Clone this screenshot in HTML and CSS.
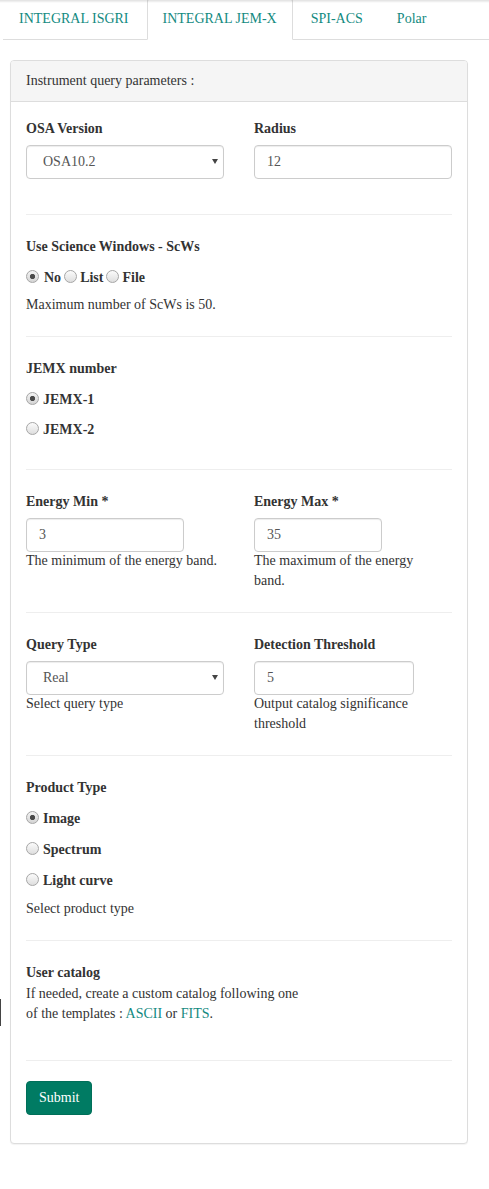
FILE: index.html
```html
<!DOCTYPE html>
<html lang="en">
<head>
<meta charset="utf-8">
<title>Instrument query parameters</title>
<link rel="stylesheet" href="styles.css">
</head>
<body>
<ul class="tabs">
  <li class="tab"><a href="#">INTEGRAL ISGRI</a></li>
  <li class="tab active"><a href="#">INTEGRAL JEM-X</a></li>
  <li class="tab"><a href="#">SPI-ACS</a></li>
  <li class="tab"><a href="#">Polar</a></li>
</ul>

<div class="panel">
  <div class="panel-heading">Instrument query parameters :</div>
  <div class="panel-body">

    <div class="section s1 grid">
      <div class="field">
        <label class="lbl">OSA Version</label>
        <div class="select-wrap"><select class="ctl"><option>OSA10.2</option></select></div>
      </div>
      <div class="field">
        <label class="lbl">Radius</label>
        <input class="ctl" type="text" value="12">
      </div>
    </div>
    <hr>

    <div class="section">
      <div class="lbl mb10">Use Science Windows - ScWs</div>
      <div class="inline-radios"><label class="ri first"><input type="radio" name="scw" checked><span>No</span></label><label class="ri"><input type="radio" name="scw"><span>List</span></label><label class="ri"><input type="radio" name="scw"><span>File</span></label></div>
      <p class="help mt7">Maximum number of ScWs is 50.</p>
    </div>
    <hr>

    <div class="section s3">
      <div class="lbl mb10">JEMX number</div>
      <label class="rv"><input type="radio" name="jemx" checked><span>JEMX-1</span></label>
      <label class="rv last"><input type="radio" name="jemx"><span>JEMX-2</span></label>
    </div>
    <hr>

    <div class="section grid">
      <div class="field">
        <label class="lbl">Energy Min *</label>
        <input class="ctl w158" type="text" value="3">
        <p class="help tight">The minimum of the energy band.</p>
      </div>
      <div class="field">
        <label class="lbl">Energy Max *</label>
        <input class="ctl w128" type="text" value="35">
        <p class="help tight narrow">The maximum of the energy band.</p>
      </div>
    </div>
    <hr>

    <div class="section grid">
      <div class="field">
        <label class="lbl">Query Type</label>
        <div class="select-wrap"><select class="ctl"><option>Real</option></select></div>
        <p class="help tight">Select query type</p>
      </div>
      <div class="field">
        <label class="lbl">Detection Threshold</label>
        <input class="ctl w160" type="text" value="5">
        <p class="help tight narrow">Output catalog significance threshold</p>
      </div>
    </div>
    <hr>

    <div class="section">
      <div class="lbl mb10">Product Type</div>
      <label class="rv wide"><input type="radio" name="prod" checked><span>Image</span></label>
      <label class="rv wide"><input type="radio" name="prod"><span>Spectrum</span></label>
      <label class="rv last"><input type="radio" name="prod"><span>Light curve</span></label>
      <p class="help mt8">Select product type</p>
    </div>
    <hr>

    <div class="section s7">
      <div class="lbl mb1">User catalog</div>
      <p class="help catalog">If needed, create a custom catalog following one of the templates : <a href="#">ASCII</a> or <a href="#">FITS</a>.</p>
    </div>
    <hr class="last">

    <button class="btn" type="button">Submit</button>
  </div>
</div>

<div class="edge-mark"></div>
</body>
</html>
```

FILE: styles.css
```css
* {
  box-sizing: border-box;
}

html,
body {
  margin: 0;
  padding: 0;
}

body {
  position: relative;
  width: 489px;
  min-height: 1189px;
  font-family: "Liberation Serif", "Times New Roman", serif;
  font-size: 14px;
  line-height: 20px;
  color: #333;
  background: #fff;
  overflow: hidden;
}

body::before {
  content: "";
  position: fixed;
  left: 0;
  right: 0;
  top: 0;
  height: 3px;
  background: linear-gradient(rgba(0, 0, 0, 0.12), rgba(0, 0, 0, 0));
  z-index: 5;
}

a {
  color: #138a7f;
  text-decoration: none;
}

/* tabs */
.tabs {
  display: flex;
  list-style: none;
  margin: -2px 0 0 3px;
  padding: 0;
  border-bottom: 1px solid #ddd;
}

.tab {
  margin: 0 2px -1px 0;
}

.tab a {
  display: block;
  padding: 10px 15px;
  line-height: 20px;
  border: 1px solid transparent;
  border-radius: 4px 4px 0 0;
}

.tab.active a {
  background: #fff;
  border-color: #ddd #ddd transparent;
}

/* panel */
.panel {
  width: 458px;
  margin: 20px 0 0 10px;
  background: #fff;
  border: 1px solid #ddd;
  border-radius: 4px;
  box-shadow: 0 1px 1px rgba(0, 0, 0, 0.05);
}

.panel-heading {
  padding: 10px 15px;
  background: #f5f5f5;
  border-bottom: 1px solid #ddd;
  border-radius: 3px 3px 0 0;
}

.panel-body {
  padding: 17px 15px 28px;
}

.section.s1 {
  padding-bottom: 14px;
}

.section.s3 {
  padding-bottom: 8px;
}

.section.s7 {
  padding-bottom: 15px;
}

.grid {
  display: grid;
  grid-template-columns: 1fr 1fr;
  column-gap: 30px;
  align-items: start;
}

hr {
  height: 0;
  margin: 21px 0 22px;
  border: 0;
  border-top: 1px solid #eee;
}

hr.last {
  margin-bottom: 20px;
}

.lbl {
  display: block;
  font-weight: bold;
  margin-bottom: 6px;
}

.lbl.mb10 {
  margin-bottom: 11px;
}

.lbl.mb1 {
  margin-bottom: 1px;
}

.help {
  margin: 0;
}

.help.tight {
  margin-top: -1px;
}

.help.narrow {
  max-width: 180px;
}

.help.mt7 {
  margin-top: 7px;
}

.help.mt8 {
  margin-top: 8px;
}

.help.catalog {
  width: 280px;
}

/* controls */
.ctl {
  display: block;
  width: 100%;
  height: 34px;
  padding: 6px 12px;
  font-family: inherit;
  font-size: 14px;
  line-height: 20px;
  color: #555;
  background: #fff;
  border: 1px solid #ccc;
  border-radius: 4px;
  box-shadow: inset 0 1px 1px rgba(0, 0, 0, 0.075);
  outline: none;
}

select.ctl {
  -webkit-appearance: none;
  appearance: none;
  padding-left: 16px;
}

.select-wrap {
  position: relative;
}

.select-wrap::after {
  content: "";
  position: absolute;
  right: 6px;
  top: 14px;
  width: 0;
  height: 0;
  border-left: 3px solid transparent;
  border-right: 3px solid transparent;
  border-top: 5px solid #444;
  pointer-events: none;
}

.w158 {
  width: 158px;
}

.w128 {
  width: 128px;
}

.w160 {
  width: 160px;
}

/* radios */
input[type="radio"] {
  -webkit-appearance: none;
  appearance: none;
  flex: none;
  width: 13px;
  height: 13px;
  margin: 2px 3px 0 0;
  border: 1px solid #a6a6a6;
  border-radius: 50%;
  background: linear-gradient(#fbfbfb, #dedede);
}

input[type="radio"]:checked {
  background:
    radial-gradient(circle, #4a4a4a 0, #4a4a4a 2.2px, rgba(74, 74, 74, 0) 3px),
    linear-gradient(#f4f4f4, #d4d4d4);
}

.inline-radios {
  display: flex;
  font-weight: bold;
}

.ri {
  display: flex;
  align-items: flex-start;
}

.ri + .ri {
  margin-left: 3px;
}

.ri.first input {
  margin-right: 5px;
}

.rv {
  display: flex;
  align-items: flex-start;
  font-weight: bold;
  margin-bottom: 10px;
}

.rv input {
  margin-right: 4px;
}

.rv.wide {
  margin-bottom: 11px;
}

.rv.last {
  margin-bottom: 0;
}

/* button */
.btn {
  display: inline-block;
  padding: 6px 12px;
  font-family: inherit;
  font-size: 14px;
  line-height: 20px;
  color: #fff;
  background: #007b63;
  border: 1px solid #006f59;
  border-radius: 4px;
  cursor: pointer;
}

.edge-mark {
  position: absolute;
  left: 0;
  top: 999px;
  width: 1px;
  height: 27px;
  background: #444;
}
```
